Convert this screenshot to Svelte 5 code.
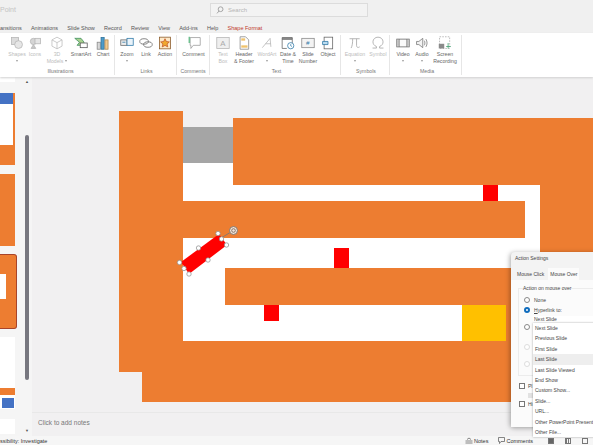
<script>
  const tabs = [
    { label: 'ansitions' },
    { label: 'Animations' },
    { label: 'Slide Show' },
    { label: 'Record' },
    { label: 'Review' },
    { label: 'View' },
    { label: 'Add-ins' },
    { label: 'Help' },
    { label: 'Shape Format', accent: true }
  ];

  const groups = [
    { name: 'Illustrations', width: 110, pad: 2, items: [
      { lines: ['Shapes'], more: true, off: true, w: 20, icon: 'shapes' },
      { lines: ['Icons'], off: true, w: 16, icon: 'icons' },
      { lines: ['3D', 'Models'], inlineMore: true, off: true, w: 28, icon: 'cube' },
      { lines: ['SmartArt'], w: 20, icon: 'smartart' },
      { lines: ['Chart'], w: 24, icon: 'chart' }
    ]},
    { name: 'Links', width: 62, pad: 2, items: [
      { lines: ['Zoom'], more: true, w: 20, icon: 'zoom' },
      { lines: ['Link'], w: 18, icon: 'link' },
      { lines: ['Action'], w: 20, icon: 'action' }
    ]},
    { name: 'Comments', width: 33, pad: 0, items: [
      { lines: ['Comment'], w: 33, icon: 'comment' }
    ]},
    { name: 'Text', width: 131, pad: 3, items: [
      { lines: ['Text', 'Box'], off: true, w: 20, icon: 'textbox' },
      { lines: ['Header', '& Footer'], w: 22, icon: 'header' },
      { lines: ['WordArt'], more: true, off: true, w: 24, icon: 'wordart' },
      { lines: ['Date &', 'Time'], w: 18, icon: 'date' },
      { lines: ['Slide', 'Number'], w: 22, icon: 'number' },
      { lines: ['Object'], w: 18, icon: 'object' }
    ]},
    { name: 'Symbols', width: 49, pad: 2, items: [
      { lines: ['Equation'], more: true, off: true, w: 24, icon: 'pi' },
      { lines: ['Symbol'], off: true, w: 22, icon: 'omega' }
    ]},
    { name: 'Media', width: 72, pad: 3, items: [
      { lines: ['Video'], more: true, w: 20, icon: 'video' },
      { lines: ['Audio'], more: true, w: 18, icon: 'audio' },
      { lines: ['Screen', 'Recording'], w: 28, icon: 'screen' }
    ]}
  ];

  const menuItems = ['Next Slide', 'Previous Slide', 'First Slide', 'Last Slide', 'Last Slide Viewed', 'End Show', 'Custom Show...', 'Slide...', 'URL...', 'Other PowerPoint Presentation...', 'Other File...'];
</script>

<div class="app">
  <header class="title">
    <span class="doc">Point</span>
    <div class="search">
      <svg width="8" height="8" viewBox="0 0 8 8"><circle cx="4.6" cy="3.2" r="2.4" fill="none" stroke="#a5a5a5" /><path d="M3 5 1 7.4" stroke="#a5a5a5" /></svg>
      <span>Search</span>
    </div>
  </header>

  <nav class="tabs">
    {#each tabs as t}
      <span class:accent={t.accent}>{t.label}</span>
    {/each}
  </nav>

  <section class="ribbon">
    {#each groups as g}
      <div class="group" style="width: {g.width}px; padding-left: {g.pad}px">
        <div class="items">
          {#each g.items as it}
            <div class="item" class:off={it.off} style="width: {it.w}px">
              <svg width="14" height="14" viewBox="0 0 18 18" fill="none" stroke-width="1">
                {#if it.icon === 'shapes'}
                  <rect x="2" y="2" width="9" height="9" fill="#dcdcdc" stroke="#b5b5b5" /><circle cx="11" cy="11" r="5" fill="#e6e6e6" stroke="#b5b5b5" />
                {:else if it.icon === 'icons'}
                  <circle cx="7" cy="7" r="4" fill="#d5d5d5" stroke="#b5b5b5" /><rect x="9" y="3" width="7" height="7" fill="#e5e5e5" stroke="#b5b5b5" /><path d="M4 16l3-5 3 5z" fill="#c8c8c8" stroke="#b5b5b5" />
                {:else if it.icon === 'cube'}
                  <path d="M9 1.5l6.5 3.5v8L9 16.5 2.500 13V5zM2.500 5 9 8.500 15.500 5M9 8.500v8" stroke="#bdbdbd" />
                {:else if it.icon === 'smartart'}
                  <path d="M1 3h8l4 5-4 4H4l3-4z" fill="#a9d18e" stroke="#3f8f5f" /><rect x="8" y="9" width="9" height="6" fill="#fff" stroke="#555" />
                {:else if it.icon === 'chart'}
                  <rect x="1.500" y="8" width="4" height="9" fill="#d9d9d9" stroke="#888" /><rect x="6.500" y="2" width="4" height="15" fill="#4d9cc9" stroke="#2a6f99" /><rect x="11.500" y="5" width="4" height="12" fill="#f2c98f" stroke="#b08a50" />
                {:else if it.icon === 'zoom'}
                  <rect x="1" y="5" width="8" height="7" fill="#ededed" stroke="#666" /><rect x="9" y="3" width="8" height="9" fill="#eaf3fa" stroke="#2f79a8" /><path d="M3 8h4" stroke="#2f79a8" />
                {:else if it.icon === 'link'}
                  <ellipse cx="6.500" cy="7" rx="5.500" ry="3.500" stroke="#666" /><ellipse cx="11.500" cy="11" rx="5.500" ry="3.500" stroke="#666" />
                {:else if it.icon === 'action'}
                  <rect x="2" y="1.500" width="14" height="15" fill="#fde9c8" stroke="#8a5a2a" /><path d="M9 3.500l1.700 3.600 3.900.5-2.900 2.600.8 3.800L9 12.100 5.500 14l.8-3.800L3.400 7.600l3.900-.5z" fill="#f0a92e" stroke="#c4572a" />
                {:else if it.icon === 'comment'}
                  <path d="M4 2h13v10H8l-3 4v-4H4z" fill="#fff" stroke="#9a9a9a" /><path d="M3 1v8" stroke="#6fbf8f" stroke-width="2" />
                {:else if it.icon === 'textbox'}
                  <rect x="1" y="2" width="16" height="14" fill="#efefef" stroke="#b5b5b5" /><text x="5.500" y="13" font-size="10" fill="#aaa" stroke="none">A</text>
                {:else if it.icon === 'header'}
                  <path d="M4 1h7l4 4v12H4z" fill="#fff" stroke="#888" /><rect x="5.500" y="3" width="5" height="3" fill="#f0c36d" /><rect x="5.500" y="12" width="8" height="3" fill="#f0c36d" />
                {:else if it.icon === 'wordart'}
                  <path d="M3 15 13 3l1 11M7 10h7" stroke="#b5b5b5" />
                {:else if it.icon === 'date'}
                  <path d="M1.500 4h13v5M1.500 4v12h6" stroke="#666" /><path d="M1.500 2h13v2h-13z" fill="#999" stroke="#666" /><circle cx="12.500" cy="12.500" r="4" fill="#fff" stroke="#2f79a8" /><path d="M12.500 10.500v2l1.500 1" stroke="#2f79a8" />
                {:else if it.icon === 'number'}
                  <rect x="1" y="3" width="16" height="12" fill="#f3f3f3" stroke="#888" /><text x="6.500" y="12" font-size="8" fill="#2f79a8" stroke="none">#</text>
                {:else if it.icon === 'object'}
                  <rect x="4" y="1.500" width="11" height="15" fill="#fff" stroke="#666" /><path d="M2 7h7v4H2z" fill="#bcdcf0" stroke="#2f79a8" />
                {:else if it.icon === 'pi'}
                  <path d="M2 3.500h13M6 3.500c0 6-.5 9-2 12M11 3.500v9c0 2 2 3 4 1.500" stroke="#b0b0b0" stroke-width="1.200" />
                {:else if it.icon === 'omega'}
                  <path d="M2 15.500h5v-2c-3-1-4.500-3.500-4.500-6C2.500 4 5.500 1.500 9 1.500s6.500 2.500 6.500 6c0 2.500-1.500 5-4.500 6v2h5" stroke="#b0b0b0" stroke-width="1.200" />
                {:else if it.icon === 'video'}
                  <rect x="1" y="4" width="16" height="10" fill="#fafafa" stroke="#666" /><path d="M4 4v10M14 4v10" stroke="#666" /><path d="M1 6.500h3M1 9h3M1 11.500h3M14 6.500h3M14 9h3M14 11.500h3" stroke="#999" />
                {:else if it.icon === 'audio'}
                  <path d="M2 7h3l5-4v12l-5-4H2z" fill="#f3f3f3" stroke="#777" /><path d="M12 6c1 2 1 4 0 6M14 4c2 3 2 7 0 10" stroke="#777" />
                {:else if it.icon === 'screen'}
                  <rect x="2" y="1" width="13" height="15" stroke="#aaa" stroke-dasharray="2 1.500" /><rect x="1" y="10" width="7" height="6" fill="#8a8a8a" /><path d="M13 9v7M10.500 13.500h6" stroke="#3f9f6f" />
                {/if}
              </svg>
              {#each it.lines as line, i}
                <span class="lbl">{line}{#if it.inlineMore && i === it.lines.length - 1}<i class="caret inline"></i>{/if}</span>
              {/each}
              {#if it.more}<i class="caret"></i>{/if}
            </div>
          {/each}
        </div>
        <div class="gname">{g.name}</div>
      </div>
    {/each}
  </section>

  <main class="work">
    <aside class="thumbs">
      <div class="list">
        <div class="thumb first"></div>
        <div class="thumb t2"><i class="blue"></i><i class="white"></i></div>
        <div class="thumb t3"></div>
        <div class="thumb t4"><i></i></div>
        <div class="thumb t5"><i class="band"></i><i class="chip"></i></div>
        <div class="thumb t6"></div>
      </div>
      <div class="scroll"><span class="arrow">▲</span><div class="track"><div class="bar"></div></div><span class="arrow">▼</span></div>
    </aside>

    <div class="stage">
      <div class="canvas">
        <svg class="slide" width="561" height="335" viewBox="32 77 561 335">
          <rect x="183" y="127" width="360" height="220" fill="#fff" />
          <rect x="183" y="127" width="50" height="36" fill="#a5a5a5" />
          <rect x="119" y="111" width="64" height="261" fill="#ed7d31" />
          <rect x="142" y="341" width="451" height="61" fill="#ed7d31" />
          <rect x="233" y="118" width="360" height="67" fill="#ed7d31" />
          <rect x="183" y="201" width="342" height="37" fill="#ed7d31" />
          <rect x="225" y="268" width="368" height="37" fill="#ed7d31" />
          <rect x="540" y="118" width="53" height="284" fill="#ed7d31" />
          <rect x="462" y="305" width="44" height="36" fill="#ffc000" />
          <rect x="506" y="305" width="87" height="36" fill="#ed7d31" />
          <rect x="483" y="185" width="15" height="16" fill="#ff0000" />
          <rect x="334" y="248" width="15" height="20" fill="#ff0000" />
          <rect x="264" y="305" width="15" height="16" fill="#ff0000" />
          <path d="M181 262 219 234 227 245 189 274z" fill="#ff0000" />
          <path d="M221 238 231 232" stroke="#8a7a70" fill="none" />
          <circle cx="233.500" cy="230.500" r="4" fill="#f3e3d8" stroke="#857568" />
          <circle cx="233.500" cy="230.500" r="1.800" fill="none" stroke="#857568" />
          <g fill="#fff" stroke="#8a8a8a" stroke-width="0.700">
            <circle cx="218" cy="233.500" r="2.200" />
            <circle cx="226.500" cy="245" r="2.200" />
            <circle cx="221.500" cy="239" r="2.200" />
            <circle cx="198.500" cy="248" r="2.200" />
            <circle cx="208" cy="260" r="2.200" />
            <circle cx="179.500" cy="262.500" r="2.200" />
            <circle cx="184" cy="268.500" r="2.200" />
            <circle cx="189" cy="274" r="2.200" />
          </g>
        </svg>
      </div>
      <div class="notes">Click to add notes</div>
    </div>
  </main>

  <footer class="status">
    <span>ssibility: Investigate</span>
    <div class="status-right">
      <span class="st">
        <svg width="8" height="7" viewBox="0 0 8 7"><path d="M2 2.500 4 1l2 1.500M.5 4h7M.5 6h7" fill="none" stroke="#555" stroke-width=".7" /></svg>
        Notes
      </span>
      <span class="st comments">
        <svg width="7" height="7" viewBox="0 0 7 7"><path d="M.5.500h6v4H3L1.500 6.500v-2h-1z" fill="none" stroke="#555" stroke-width=".7" /></svg>
        Comments
      </span>
      <i class="view sel"></i>
      <i class="view grid"></i>
      <i class="view"></i>
    </div>
  </footer>

  <div class="dialog">
    <div class="dtitle">Action Settings</div>
    <div class="dtabs"><span>Mouse Click</span><span class="on">Mouse Over</span></div>
    <div class="dbody">
      <div class="box">
        <div class="legend">Action on mouse over</div>
        <div class="opt"><i class="radio"></i><span>None</span></div>
        <div class="opt"><i class="radio checked"></i><span><u>H</u>yperlink to:</span></div>
        <div class="select">Next Slide</div>
        <i class="radio r3"></i>
        <i class="radio r4"></i>
        <i class="radio r5"></i>
      </div>
      <i class="check c1"></i>
      <span class="cut t1">Pl</span>
      <i class="chipbox"></i>
      <i class="check c2"></i>
      <span class="cut t2b">Hi</span>
    </div>
    <ul class="menu">
      {#each menuItems as m, i}
        <li class:hover={i === 3}>{m}</li>
      {/each}
    </ul>
  </div>
</div>

<style>
  :global(body) {
    margin: 0;
    overflow: hidden;
  }
  .app {
    position: relative;
    width: 593px;
    height: 445px;
    overflow: hidden;
    display: flex;
    flex-direction: column;
    background: #f0f0f0;
    font-family: "Liberation Sans", Arial, sans-serif;
    font-size: 6px;
    color: #444;
  }
  .title {
    height: 22px;
    display: flex;
    align-items: flex-start;
    flex: none;
  }
  .doc {
    width: 210px;
    margin-top: 6px;
    color: #c4c4c4;
    font-size: 7px;
  }
  .search {
    width: 151px;
    height: 12px;
    margin-top: 3px;
    border: 1px solid #dcdcdc;
    background: #f3f3f3;
    display: flex;
    align-items: center;
    gap: 4px;
    padding-left: 5px;
    color: #b5b5b5;
  }
  .tabs {
    height: 11px;
    display: flex;
    align-items: center;
    gap: 9.200px;
    flex: none;
    font-size: 5.500px;
    color: #555;
  }
  .accent {
    color: #c0392b;
  }
  .ribbon {
    height: 44px;
    flex: none;
    display: flex;
    background: #fff;
    padding-left: 5px;
    box-shadow: 0 1px 2px #d0d0d0;
    position: relative;
    z-index: 1;
  }
  .group {
    height: 40px;
    margin-top: 2px;
    border-right: 1px solid #e6e6e6;
    box-sizing: border-box;
    display: flex;
    flex-direction: column;
    flex: none;
  }
  .items {
    flex: 1;
    display: flex;
  }
  .item {
    display: flex;
    flex-direction: column;
    align-items: center;
    flex: none;
    text-align: center;
    font-size: 5.200px;
    line-height: 7px;
    color: #666;
  }
  .item svg {
    flex: none;
    margin: 1px 0 1px;
  }
  .off {
    color: #bcbcbc;
  }
  .lbl {
    display: block;
    white-space: nowrap;
    flex: none;
  }
  .caret {
    display: block;
    width: 0;
    height: 0;
    margin-top: 2px;
    border: 1.500px solid transparent;
    border-top: 2px solid #999;
    border-bottom: none;
    flex: none;
  }
  .caret.inline {
    display: inline-block;
    margin: 0 0 1px 2px;
  }
  .gname {
    text-align: center;
    font-size: 5.200px;
    line-height: 6px;
    color: #777;
    margin-bottom: 1px;
  }
  .work {
    flex: 1;
    min-height: 0;
    display: flex;
  }
  .thumbs {
    width: 32px;
    flex: none;
    display: flex;
    background: #f5f5f5;
  }
  .list {
    width: 24px;
    display: flex;
    flex-direction: column;
  }
  .thumb {
    width: 15px;
    background: #ed7d31;
    box-sizing: border-box;
    flex: none;
  }
  .first {
    height: 5px;
    background: #fff;
    margin-bottom: 11px;
  }
  .t2 {
    height: 72px;
    display: flex;
    flex-direction: column;
    margin-bottom: 9px;
  }
  .t2 .blue {
    height: 11px;
    width: 13px;
    background: #4472c4;
    flex: none;
  }
  .t2 .white {
    height: 41px;
    width: 13px;
    background: #fff;
    flex: none;
  }
  .t3 {
    height: 72px;
    margin-bottom: 8px;
  }
  .t4 {
    width: 17px;
    height: 75px;
    border: 1px solid #a8442a;
    border-left: none;
    border-radius: 0 3px 3px 0;
    margin-bottom: 8px;
    padding-top: 19px;
  }
  .t4 i {
    display: block;
    width: 6px;
    height: 25px;
    background: #fff;
  }
  .t5 {
    height: 72px;
    background: #fff;
    padding-top: 51px;
    margin-bottom: 10px;
  }
  .t5 .band {
    display: block;
    height: 7px;
    background: #ed7d31;
  }
  .t5 .chip {
    display: block;
    width: 12px;
    height: 10px;
    margin: 3px 0 0 2px;
    background: #4472c4;
  }
  .t6 {
    height: 15px;
    background: #fff;
  }
  .scroll {
    width: 6px;
    padding-top: 2px;
    box-sizing: border-box;
    display: flex;
    flex-direction: column;
    align-items: center;
    height: 357px;
  }
  .arrow {
    font-size: 4px;
    line-height: 6px;
    color: #555;
  }
  .track {
    flex: 1;
    width: 100%;
    padding-top: 50px;
  }
  .bar {
    width: 4px;
    height: 245px;
    background: #77777f;
    border-radius: 2px;
    margin: 0 auto;
  }
  .stage {
    flex: 1;
    min-width: 0;
    display: flex;
    flex-direction: column;
    background: #f1f0f1;
  }
  .canvas {
    height: 335px;
    flex: none;
  }
  .slide {
    display: block;
  }
  .notes {
    flex: 1;
    border-top: 1px solid #e8e8e8;
    padding: 6px 0 0 6px;
    font-size: 6.500px;
    color: #777;
  }
  .status {
    height: 9px;
    flex: none;
    display: flex;
    align-items: center;
    justify-content: space-between;
    background: #f6f6f6;
    font-size: 5.500px;
    color: #333;
  }
  .status-right {
    display: flex;
    align-items: center;
    gap: 11px;
    padding-right: 5px;
  }
  .st {
    display: flex;
    align-items: center;
    gap: 1px;
  }
  .comments {
    margin-left: -1px;
    margin-right: 4px;
  }
  .view {
    width: 6px;
    height: 6px;
    border: 1px solid #777;
    box-sizing: border-box;
    display: block;
  }
  .view.sel {
    background: #666;
  }
  .view.grid {
    background: repeating-linear-gradient(90deg, #777 0 1px, #f6f6f6 1px 2px);
  }
  .dialog {
    position: absolute;
    left: 511px;
    top: 252px;
    width: 120px;
    height: 175px;
    background: #f3f3f3;
    border-radius: 4px;
    box-shadow: -1px 1px 5px rgba(0, 0, 0, 0.35);
    font-size: 5px;
    color: #444;
    z-index: 3;
  }
  .dtitle {
    padding: 3px 0 0 4px;
    height: 16px;
    box-sizing: border-box;
  }
  .dtabs {
    display: flex;
    gap: 6px;
    padding: 3px 0 0 6px;
    height: 12px;
    box-sizing: border-box;
  }
  .dtabs .on {
    background: #fbfbfb;
    margin-top: -3px;
    padding: 3px 2px 0;
    margin-left: -2px;
  }
  .dbody {
    position: relative;
    background: #fbfbfb;
    height: 147px;
    padding: 8px 0 0 7px;
    box-sizing: border-box;
  }
  .box {
    position: relative;
    height: 88px;
    border: 1px solid #ececec;
    box-sizing: border-box;
  }
  .legend {
    width: fit-content;
    height: 7px;
    line-height: 7px;
    margin: -4px 0 3.500px 4px;
    background: #fbfbfb;
  }
  .opt {
    display: flex;
    align-items: center;
    gap: 4px;
    margin-left: 5px;
    height: 9px;
    margin-bottom: 1px;
  }
  .radio {
    width: 4px;
    height: 4px;
    border: 1px solid #888;
    border-radius: 50%;
    display: block;
    background: #fff;
  }
  .radio.checked {
    width: 2px;
    height: 2px;
    border: 2px solid #0f6cbd;
  }
  .r3, .r4, .r5 {
    position: absolute;
    left: 5px;
  }
  .r3 { top: 35px; }
  .r4 { top: 55px; border-color: #ddd; }
  .r5 { top: 72px; border-color: #ddd; }
  .check {
    position: absolute;
    left: 8px;
    width: 4px;
    height: 4px;
    border: 1px solid #777;
    display: block;
    background: #fff;
  }
  .c1 { top: 103px; }
  .c2 { top: 121px; }
  .cut {
    position: absolute;
    left: 17px;
  }
  .t1 { top: 103px; }
  .t2b { top: 121px; }
  .chipbox {
    position: absolute;
    left: 17px;
    top: 113px;
    width: 5px;
    height: 5px;
    background: #e2e2e2;
  }
  .select {
    margin-left: 14px;
    height: 8px;
    line-height: 7px;
    padding-left: 1px;
    background: #fff;
    border-bottom: 1px solid #ccc;
    box-sizing: border-box;
  }
  .menu {
    position: absolute;
    left: 22px;
    top: 71px;
    width: 120px;
    margin: 0;
    padding: 0;
    list-style: none;
    background: #fff;
    box-shadow: 0 0 2px rgba(0, 0, 0, 0.35);
    z-index: 4;
  }
  .menu li {
    height: 10.400px;
    line-height: 10.400px;
    padding-left: 2px;
    white-space: nowrap;
  }
  .menu .hover {
    background: #eeeeee;
  }
</style>
